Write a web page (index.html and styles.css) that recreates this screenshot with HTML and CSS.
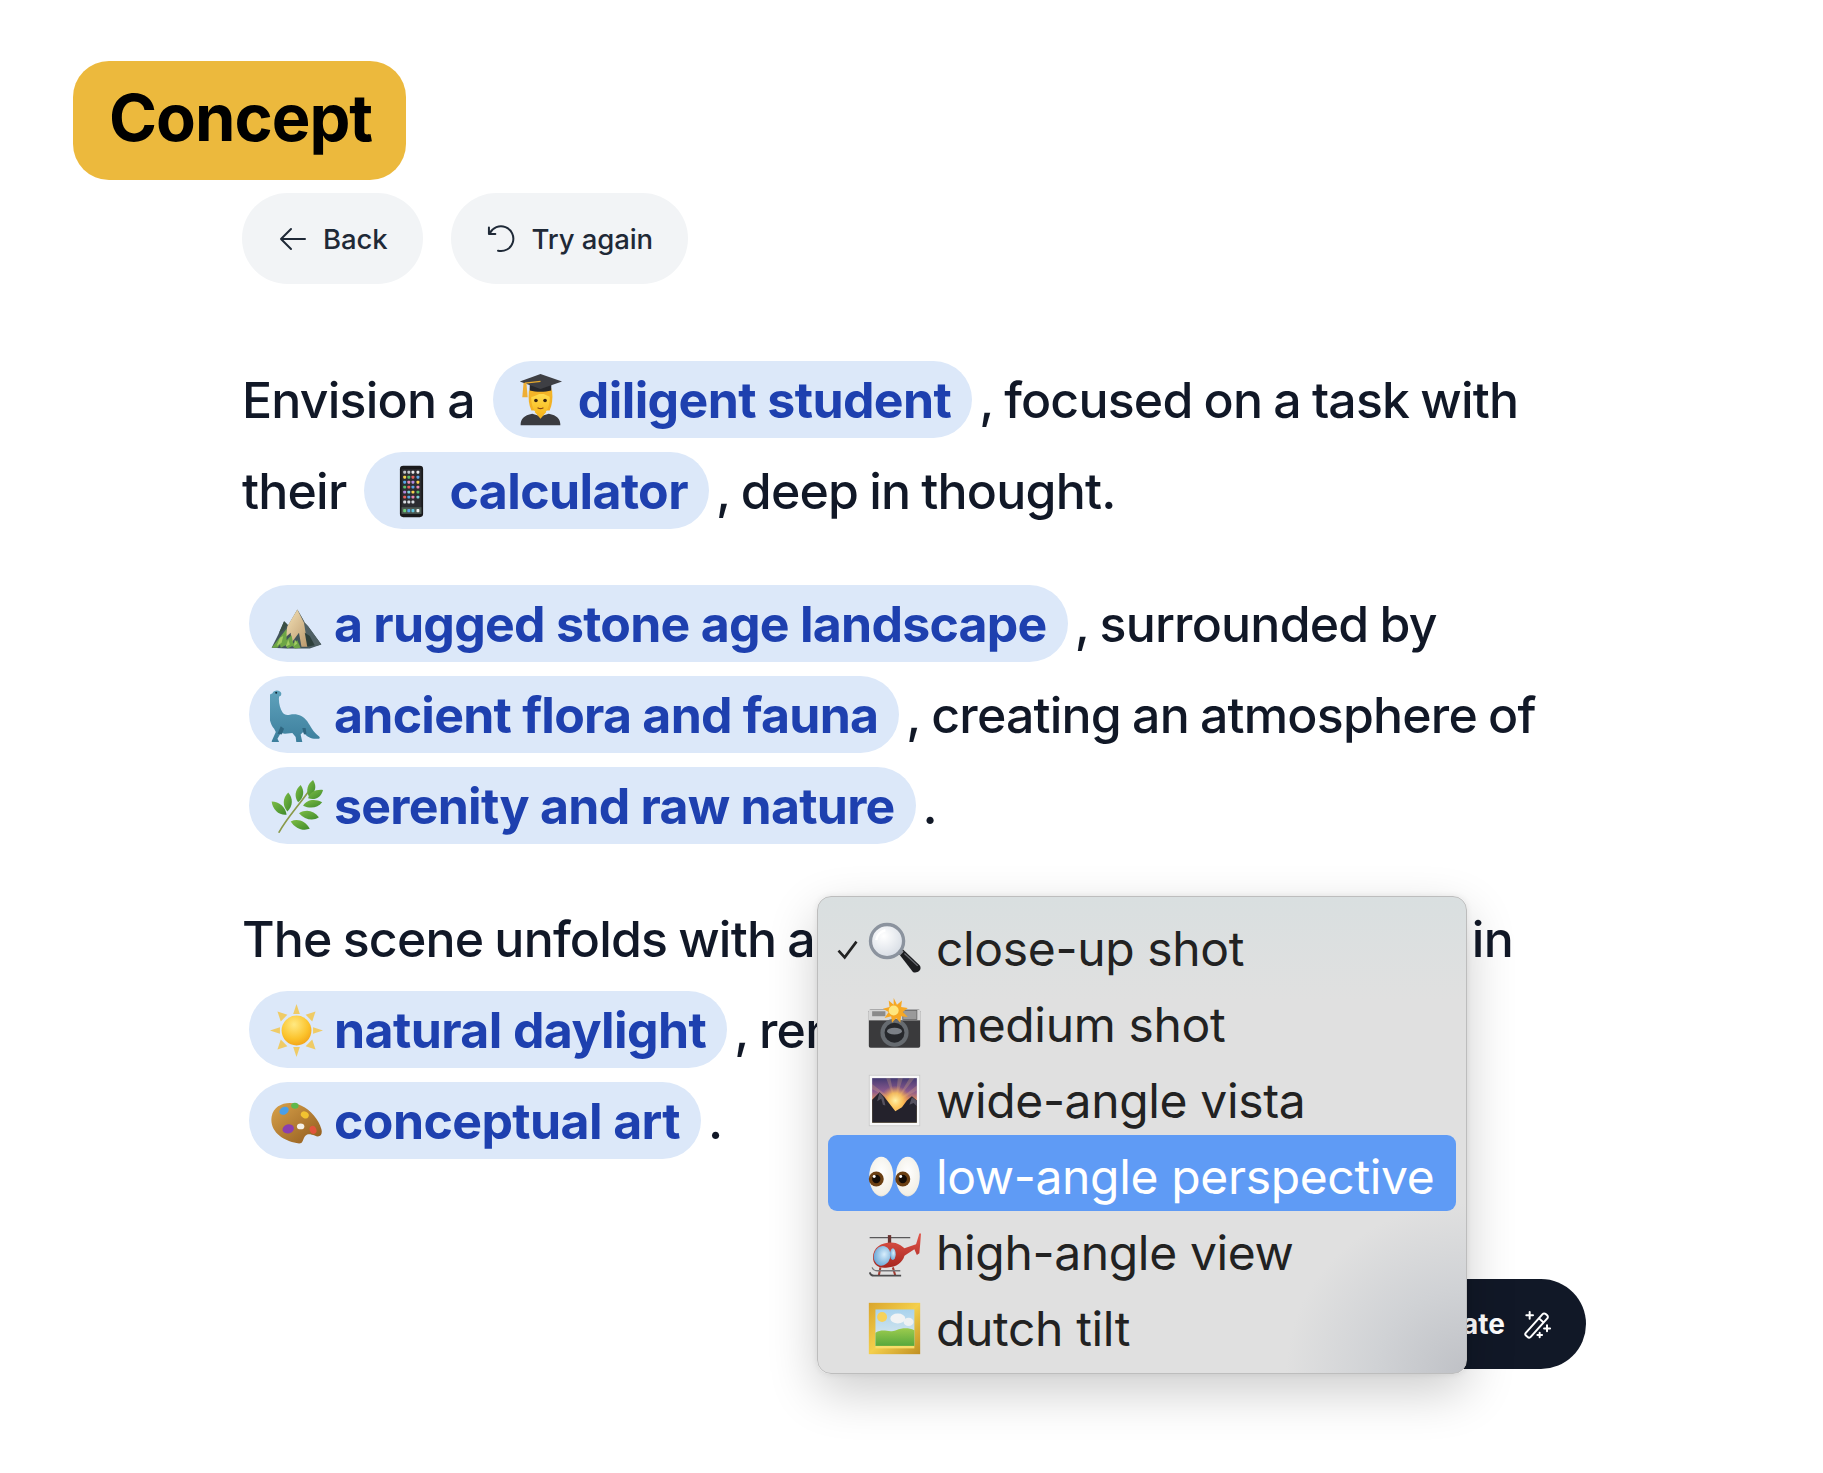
FILE: index.html
```html
<!DOCTYPE html>
<html lang="en">
<head>
<meta charset="utf-8">
<title>Concept</title>
<link rel="stylesheet" href="styles.css">
</head>
<body>
<main class="page">
  <div class="badge">Concept</div>
  <div class="content">
    <div class="toolbar">
      <button class="tool">
        <svg class="tool-icon" viewBox="0 0 24 24"><path d="M10.500 19.500 3 12l7.500-7.500M3 12h18"/></svg>
        Back
      </button>
      <button class="tool">
        <svg class="tool-icon" viewBox="0 0 24 24"><path d="M2.200 3.400v4.800H7M2.800 7.800A9.300 9.300 0 1 1 9 20.800"/></svg>
        Try again
      </button>
    </div>

    <p class="story">Envision a <span class="pill loose"><svg class="emoji" viewBox="0 0 64 64"><use href="#e-student"/></svg>diligent student</span>, focused on a task with their <span class="pill loose"><svg class="emoji" viewBox="0 0 64 64"><use href="#e-phone"/></svg>calculator</span>, deep in thought.</p>

    <p class="story"><span class="pill"><svg class="emoji" viewBox="0 0 64 64"><use href="#e-mountain"/></svg>a rugged stone age landscape</span>, surrounded by <span class="pill"><svg class="emoji" viewBox="0 0 64 64"><use href="#e-dino"/></svg>ancient flora and fauna</span>, creating an atmosphere of <span class="pill"><svg class="emoji" viewBox="0 0 64 64"><use href="#e-herb"/></svg>serenity and raw nature</span>.</p>

    <p class="story">The scene unfolds with a <span class="pill"><svg class="emoji" viewBox="0 0 64 64"><use href="#e-glass"/></svg>close-up shot</span>, bathed in <span class="pill loose"><svg class="emoji" viewBox="0 0 64 64"><use href="#e-sun"/></svg>natural daylight</span>, rendered in the style of <span class="pill loose"><svg class="emoji" viewBox="0 0 64 64"><use href="#e-palette"/></svg>conceptual art</span>.</p>

    <div class="actions">
      <button class="generate">Generate
        <svg class="wand" viewBox="0 0 24 24"><path d="m3.600 18.600 12.600-14a1.600 1.600 0 0 1 2.300-.1l1.100 1a1.600 1.600 0 0 1 .1 2.300L7.300 21.700a1.600 1.600 0 0 1-2.300.1l-1.300-1.100a1.600 1.600 0 0 1-.1-2.100ZM13.400 7.600l3.500 3.300M6.500 3v5M4 5.500h5M19.500 13v4.500M17.300 15.300h4.500M14 18.500v3.500M12.300 20.300h3.500"/></svg>
      </button>
    </div>
  </div>

  <ul class="menu">
    <li class="menu-item"><svg class="check" viewBox="0 0 24 24"><path d="m4 13 5.500 6L20 5"/></svg><svg class="emoji" viewBox="0 0 64 64"><use href="#e-glass"/></svg>close-up shot</li>
    <li class="menu-item"><svg class="emoji" viewBox="0 0 64 64"><use href="#e-camera"/></svg>medium shot</li>
    <li class="menu-item"><svg class="emoji" viewBox="0 0 64 64"><use href="#e-vista"/></svg>wide-angle vista</li>
    <li class="menu-item active"><svg class="emoji" viewBox="0 0 64 64"><use href="#e-eyes"/></svg>low-angle perspective</li>
    <li class="menu-item"><svg class="emoji" viewBox="0 0 64 64"><use href="#e-heli"/></svg>high-angle view</li>
    <li class="menu-item"><svg class="emoji" viewBox="0 0 64 64"><use href="#e-frame"/></svg>dutch tilt</li>
  </ul>
</main>

<svg class="sprites" aria-hidden="true">
  <defs>
    <linearGradient id="g-skin" x1="0" y1="0" x2="0" y2="1"><stop offset="0" stop-color="#ffdc4e"/><stop offset="1" stop-color="#f8b91e"/></linearGradient>
    <radialGradient id="g-sun" cx=".42" cy=".3" r=".8"><stop offset="0" stop-color="#ffe982"/><stop offset=".6" stop-color="#fbc32c"/><stop offset="1" stop-color="#f09a12"/></radialGradient>
    <linearGradient id="g-dino" x1="0" y1="0" x2="0" y2="1"><stop offset="0" stop-color="#5fa2bc"/><stop offset="1" stop-color="#3b7d9b"/></linearGradient>
    <linearGradient id="g-wood" x1="0" y1="0" x2="1" y2="1"><stop offset="0" stop-color="#d9a24a"/><stop offset="1" stop-color="#8f5a1d"/></linearGradient>
    <linearGradient id="g-dusk" x1="0" y1="0" x2="0" y2="1"><stop offset="0" stop-color="#443a72"/><stop offset=".3" stop-color="#8c5a8e"/><stop offset=".55" stop-color="#f0984a"/><stop offset=".8" stop-color="#ffe58a"/></linearGradient>
    <radialGradient id="g-glow" cx=".5" cy=".5" r=".5"><stop offset="0" stop-color="#fff2a8"/><stop offset=".5" stop-color="#ffc85a" stop-opacity=".85"/><stop offset="1" stop-color="#f59a4a" stop-opacity="0"/></radialGradient>
    <radialGradient id="g-glass" cx=".4" cy=".35" r=".7"><stop offset="0" stop-color="#fff"/><stop offset="1" stop-color="#d5dbe3"/></radialGradient>
    <linearGradient id="g-gold" x1="0" y1="0" x2="1" y2="1"><stop offset="0" stop-color="#d9a52c"/><stop offset=".5" stop-color="#f4cf4c"/><stop offset="1" stop-color="#c08f22"/></linearGradient>
    <linearGradient id="g-sky" x1="0" y1="0" x2="0" y2="1"><stop offset="0" stop-color="#a9d3ee"/><stop offset="1" stop-color="#e3ecec"/></linearGradient>
    <linearGradient id="g-hill" x1="0" y1="0" x2="0" y2="1"><stop offset="0" stop-color="#9ccb4e"/><stop offset="1" stop-color="#57a83c"/></linearGradient>
    <linearGradient id="g-red" x1="0" y1="0" x2="0" y2="1"><stop offset="0" stop-color="#e2574c"/><stop offset="1" stop-color="#a8261f"/></linearGradient>
    <radialGradient id="g-window" cx=".6" cy=".4" r=".7"><stop offset="0" stop-color="#d8eefc"/><stop offset="1" stop-color="#5f9fd2"/></radialGradient>
    <radialGradient id="g-eye" cx=".5" cy=".4" r=".65"><stop offset="0" stop-color="#fff"/><stop offset=".85" stop-color="#f2efe6"/><stop offset="1" stop-color="#d4cfc0"/></radialGradient>
    <linearGradient id="g-rock" x1="0" y1="0" x2="1" y2="1"><stop offset="0" stop-color="#f5e3b8"/><stop offset="1" stop-color="#b8966a"/></linearGradient>
    <linearGradient id="g-leaf" x1="0" y1="0" x2="1" y2="1"><stop offset="0" stop-color="#7dbd45"/><stop offset="1" stop-color="#3f8a2c"/></linearGradient>

    <symbol id="e-student" viewBox="0 0 64 64">
      <path d="M8 62c0-8 4-12 14-14l10 3 10-3c10 2 14 6 14 14Z" fill="#3a3b40"/>
      <path d="M25 46l7 8 7-8-3-4h-8Z" fill="#f5b722"/>
      <path d="M18 20c-1 10 0 18 3 24h22c3-6 4-14 3-24Z" fill="#f2b125"/>
      <path d="M21 24h22c1 14-3 24-11 24s-12-10-11-24Z" fill="url(#g-skin)"/>
      <path d="M19 17h26l1 11c-5-1-9-3-13-6-3 3-8 5-14 6Z" fill="#f3b428"/>
      <circle cx="26.500" cy="32" r="2.200" fill="#3a2410"/><circle cx="37.500" cy="32" r="2.200" fill="#3a2410"/>
      <path d="M29 41c2 1 4 1 6 0" fill="none" stroke="#8a4a12" stroke-width="1.500" stroke-linecap="round"/>
      <path d="M19 13v7c8 2 18 2 26 0v-7Z" fill="#27282c"/>
      <path d="M32 0 58 9 32 18 7 9Z" fill="#3e3f44"/>
      <path d="M32 9 13 11" fill="none" stroke="#e7a92c" stroke-width="1.500"/>
      <path d="M11.500 11h3.500l1.500 17h-6.500Z" fill="#eeae35"/>
    </symbol>

    <symbol id="e-phone" viewBox="0 0 64 64">
      <rect x="18" y="1" width="28" height="62" rx="4" fill="#1a1a1c"/>
      <rect x="20" y="5" width="24" height="54" fill="#2c2c30"/>
      <g fill="#bfc4c9"><rect x="22" y="7" width="3.500" height="3.500" rx="1"/><rect x="27" y="7" width="3.500" height="3.500" rx="1"/></g>
      <g fill="#e9e9ea"><rect x="32" y="7" width="3.500" height="3.500" rx="1"/><rect x="38" y="7" width="3.500" height="3.500" rx="1"/></g>
      <g fill="#f6d24a"><rect x="22" y="13" width="3.500" height="3.500" rx="1"/><rect x="38" y="19" width="3.500" height="3.500" rx="1"/><rect x="32" y="31" width="3.500" height="3.500" rx="1"/></g>
      <g fill="#5bbf6a"><rect x="27" y="13" width="3.500" height="3.500" rx="1"/><rect x="22" y="25" width="3.500" height="3.500" rx="1"/><rect x="38" y="31" width="3.500" height="3.500" rx="1"/></g>
      <g fill="#e66060"><rect x="32" y="13" width="3.500" height="3.500" rx="1"/><rect x="27" y="25" width="3.500" height="3.500" rx="1"/><rect x="22" y="37" width="3.500" height="3.500" rx="1"/></g>
      <g fill="#5aa5e8"><rect x="38" y="13" width="3.500" height="3.500" rx="1"/><rect x="22" y="19" width="3.500" height="3.500" rx="1"/><rect x="32" y="25" width="3.500" height="3.500" rx="1"/><rect x="27" y="37" width="3.500" height="3.500" rx="1"/></g>
      <g fill="#e88ab5"><rect x="27" y="19" width="3.500" height="3.500" rx="1"/><rect x="38" y="25" width="3.500" height="3.500" rx="1"/><rect x="32" y="37" width="3.500" height="3.500" rx="1"/></g>
      <g fill="#b08adf"><rect x="32" y="19" width="3.500" height="3.500" rx="1"/><rect x="22" y="31" width="3.500" height="3.500" rx="1"/></g>
      <g fill="#7fd0d8"><rect x="27" y="31" width="3.500" height="3.500" rx="1"/><rect x="38" y="37" width="3.500" height="3.500" rx="1"/></g>
      <g fill="#d7dbe0"><rect x="22" y="43" width="3.500" height="3.500" rx="1"/><rect x="27" y="43" width="3.500" height="3.500" rx="1"/><rect x="32" y="43" width="3.500" height="3.500" rx="1"/></g>
      <rect x="20" y="51" width="24" height="8" fill="#4d5a52"/>
      <rect x="22" y="53" width="3.500" height="4" rx="1" fill="#6dcf78"/><rect x="27" y="53" width="3.500" height="4" rx="1" fill="#5aa5e8"/><rect x="32" y="53" width="3.500" height="4" rx="1" fill="#62c7e0"/><rect x="38" y="53" width="3.500" height="4" rx="1" fill="#f2f2f2"/>
    </symbol>

    <symbol id="e-mountain" viewBox="0 0 64 64">
      <path d="M33 14 22 33l-5-5-7 16-8 16 18 1h28l14-5-16-22-4-4-2-4Z" fill="#42545a"/>
      <path d="M33 14 21 34l-3 14 7-6 1 12 9-12 3 17h10l-2-24-6-8Z" fill="url(#g-rock)"/>
      <path d="M33 14l8 16 5 30 16-4-16-22-4-4Z" fill="#4f6064"/>
      <path d="M20 37 2 60h7l3-4 1 4 6-3 2 4 6-3 3 3 7-1-4-9-5 4-2-10-6 6Z" fill="#6da546"/>
      <path d="M12 48l-4 10 6-4 2-8ZM22 50l-3 9 5-3ZM30 50l-1 8 4-3Z" fill="#a3cc62"/>
      <path d="M42 42l3 17 9-2-6-11Z" fill="#2d3f3b"/>
      <path d="M17 28l-6 14 6-4 4-6Z" fill="#3a4f44"/>
    </symbol>

    <symbol id="e-dino" viewBox="0 0 64 64">
      <path d="M3 5c1-3 6-4 9-2 2 1 2 3 1 5l-2 1c-1 6 1 14 4 19 2 3 5 4 9 3 8-2 16 1 21 8 4 6 7 13 14 18 2 2 1 3-1 3-7 1-13-2-17-7l-1-1-3 3 2 9-2 2h-5l-1-8-4-5-9 1-5-1-4 7 3 6-2 1-7-1-1-3 5-11-2-4c-5-5-6-14-7-22-1-5-1-9-3-12-2 0-5-1-4-3Z" fill="url(#g-dino)"/>
      <circle cx="7.500" cy="4.500" r="1.200" fill="#102733"/>
      <path d="M13 45l-4 9 5 1 3-7ZM39 47l2 8 3-1-1-7Z" fill="#2f6680"/>
    </symbol>

    <symbol id="e-herb" viewBox="0 0 64 64">
      <path d="M11 63C20 46 34 32 50 9" fill="none" stroke="#8a9a4a" stroke-width="2" stroke-linecap="round"/>
      <g fill="url(#g-leaf)">
        <path d="M52 0c5 8 3 15-5 20-4-7-2-15 5-20Z"/>
        <path d="M64 12c-2 9-10 13-18 10 2-7 9-11 18-10Z"/>
        <path d="M37 6c5 7 4 15-3 21-5-7-4-15 3-21Z"/>
        <path d="M63 27c-5 7-15 8-23 4 4-7 14-9 23-4Z"/>
        <path d="M22 15c6 7 6 16-1 23-6-7-6-16 1-23Z"/>
        <path d="M59 45c-7 5-17 3-24-5 9-5 18-3 24 5Z"/>
        <path d="M2 26c9 0 17 7 18 16-9 1-17-6-18-16Z"/>
        <path d="M48 59c-9 3-18-1-23-9 9-4 18 0 23 9Z"/>
      </g>
    </symbol>

    <symbol id="e-sun" viewBox="0 0 64 64">
      <g fill="#efcb66">
        <path d="M32 0l4 12h-8Z"/><path d="M32 64l-4-12h8Z"/><path d="M0 32l12-4v8Z"/><path d="M64 32l-12 4v-8Z"/>
        <path d="M9 9l12 4-8 8Z"/><path d="M55 9l-4 12-8-8Z"/><path d="M9 55l4-12 8 8Z"/><path d="M55 55l-12-4 8-8Z"/>
      </g>
      <circle cx="32" cy="32" r="18" fill="url(#g-sun)"/>
    </symbol>

    <symbol id="e-palette" viewBox="0 0 64 64">
      <path d="M2 26C5 10 24 6 38 13c11 5 21 17 24 28 2 7-2 11-8 8-5-2-9-3-12 1-3 5-2 10-10 8C16 55-1 44 2 26Z" fill="url(#g-wood)"/>
      <ellipse cx="17" cy="19" rx="6" ry="4.500" fill="#4a9fe8" transform="rotate(-30 17 19)"/>
      <ellipse cx="30" cy="13" rx="4.500" ry="3.500" fill="#5fb84c"/>
      <ellipse cx="42" cy="24" rx="5" ry="4" fill="#f2c230" transform="rotate(30 42 24)"/>
      <ellipse cx="22" cy="41" rx="7" ry="5.500" fill="#8a3fae" transform="rotate(-15 22 41)"/>
      <ellipse cx="52" cy="42" rx="4" ry="5" fill="#e2553c" transform="rotate(-20 52 42)"/>
      <ellipse cx="37" cy="38" rx="4.500" ry="3.500" fill="#f4f1e8"/>
    </symbol>

    <symbol id="e-glass" viewBox="0 0 64 64">
      <path d="M37 38 42 33 62 52c2 2 2 5 0 7s-6 3-8 1Z" fill="#1c1d20"/>
      <path d="M44 38 60 53" stroke="#6d7076" stroke-width="1.500" fill="none"/>
      <path d="M33 34 37 30 43 36 39 40Z" fill="#8e9299"/>
      <circle cx="23" cy="23" r="20" fill="url(#g-glass)" stroke="#8b939e" stroke-width="4"/>
      <path d="M10 22a14 14 0 0 1 11-12" fill="none" stroke="#fff" stroke-width="3"/>
    </symbol>

    <symbol id="e-camera" viewBox="0 0 64 64">
      <rect x="1" y="14" width="62" height="46" rx="2" fill="#3a3a3c"/>
      <rect x="1" y="14" width="62" height="13" fill="#d6d6d6"/>
      <rect x="5" y="16" width="16" height="6" fill="#8b8b8b"/>
      <rect x="42" y="15" width="17" height="11" fill="#9a9a9a" stroke="#666"/>
      <circle cx="32" cy="42" r="17" fill="#666b70"/>
      <circle cx="32" cy="42" r="12" fill="#26282c"/>
      <ellipse cx="32" cy="40" rx="9" ry="4" fill="#7b8087"/>
      <path d="M31 0l4 8 6-5-1 8 8 1-6 5 6 6-8-1-1 8-5-6-5 6-1-8-8 2 5-7-7-4 8-2-1-8 6 5Z" fill="#f6a824"/>
      <circle cx="31" cy="15" r="6" fill="#ffe77e"/>
    </symbol>

    <symbol id="e-vista" viewBox="0 0 64 64">
      <rect x="1.500" y="1.500" width="61" height="61" fill="#f8f8f8" stroke="#c9c9c9"/>
      <rect x="5" y="5" width="54" height="54" fill="url(#g-dusk)"/>
      <path d="M33 34 22 5h5ZM33 34 36 5h6ZM33 34 50 5h6ZM33 34 5 12v6ZM33 34 59 14v6Z" fill="#ffcf80" fill-opacity=".22"/>
      <circle cx="33" cy="32" r="18" fill="url(#g-glow)"/>
      <path d="M5 59V31l9-9 6 6 6 8 7 9 8-5 6-8 6-5 6 5v27Z" fill="#24222c"/>
      <path d="M14 22l-3 11 5-3 2 7 3 1-2-9ZM53 28l-3 9 5-2 4 4v-7Z" fill="#55515f"/>
    </symbol>

    <symbol id="e-eyes" viewBox="0 0 64 64">
      <ellipse cx="16" cy="32" rx="14.500" ry="24" fill="url(#g-eye)"/>
      <ellipse cx="48" cy="32" rx="14.500" ry="24" fill="url(#g-eye)"/>
      <circle cx="10" cy="35" r="9" fill="#6b3f12"/><circle cx="10" cy="35" r="5" fill="#140c05"/><circle cx="7.500" cy="32" r="1.800" fill="#fff"/>
      <circle cx="42" cy="35" r="9" fill="#6b3f12"/><circle cx="42" cy="35" r="5" fill="#140c05"/><circle cx="39.500" cy="32" r="1.800" fill="#fff"/>
    </symbol>

    <symbol id="e-heli" viewBox="0 0 64 64">
      <path d="M2 14h49" stroke="#59585a" stroke-width="1.500"/>
      <rect x="24" y="11" width="4" height="10" fill="#6a3330"/>
      <path d="M6 38C6 26 16 20 28 20c8 0 12 4 16 7l14-5 4-13h2l-1 13-1 11-3 2-3-7-12 8c-2 8-10 14-20 14C12 52 6 46 6 38Z" fill="url(#g-red)"/>
      <ellipse cx="17" cy="36" rx="10" ry="12" fill="url(#g-window)" transform="rotate(15 17 36)"/>
      <ellipse cx="30" cy="34" rx="3.500" ry="7" fill="url(#g-window)"/>
      <path d="M15 50l-2 10M30 50l3 10" stroke="#a33a30" stroke-width="2.500"/>
      <path d="M2 56c1 3 2 4 5 4h33" stroke="#4d4d4f" stroke-width="2" fill="none"/>
      <path d="M5 50c1 3 3 4 6 4h28" stroke="#77777a" stroke-width="1.600" fill="none"/>
    </symbol>

    <symbol id="e-frame" viewBox="0 0 64 64">
      <rect x="1" y="1" width="62" height="62" fill="url(#g-gold)"/>
      <rect x="9" y="9" width="47" height="44" fill="url(#g-sky)"/>
      <circle cx="17" cy="18" r="6" fill="#f6d25a"/>
      <ellipse cx="36" cy="20" rx="9" ry="6" fill="#f1f3f4"/><ellipse cx="49" cy="24" rx="6" ry="5" fill="#eef1f3"/>
      <path d="M9 37c11-6 15 1 25-3 8-3 15-3 22 0v19H9Z" fill="url(#g-hill)"/>
      <rect x="9" y="53" width="47" height="3" fill="#f8dd6a"/>
    </symbol>
  </defs>
</svg>
</body>
</html>
```

FILE: styles.css
```css
* { box-sizing: border-box; }

html, body {
  margin: 0;
  background: #fff;
}

body {
  min-height: 1473px;
  overflow: hidden;
  font-family: Inter, "Liberation Sans", sans-serif;
  color: #111827;
}

.page {
  position: relative;
  padding: 61px 0 0 73px;
}

.sprites {
  position: absolute;
  width: 0;
  height: 0;
}

.badge {
  display: inline-flex;
  align-items: center;
  height: 119px;
  width: 333px;
  padding: 0 0 6px 36px;
  border-radius: 36px;
  background: #ecb93d;
  color: #000;
  font-size: 65px;
  font-weight: 700;
  letter-spacing: -1px;
}

.content {
  width: 1344px;
  margin: 13px 0 0 169px;
}

.toolbar {
  display: flex;
  gap: 28px;
}

.tool {
  display: flex;
  align-items: center;
  gap: 14px;
  height: 91px;
  padding: 0 35px;
  border: 0;
  border-radius: 46px;
  background: #f2f4f6;
  color: #1f2937;
  font: 500 27.500px Inter, "Liberation Sans", sans-serif;
  letter-spacing: -0.1px;
}

.tool-icon {
  width: 32px;
  height: 32px;
  fill: none;
  stroke: #1f2937;
  stroke-width: 1.500;
  stroke-linecap: round;
  stroke-linejoin: round;
}

.story {
  margin: 0 0 42px;
  font-size: 50px;
  font-weight: 550;
  line-height: 91px;
  letter-spacing: -0.800px;
  word-spacing: -1.500px;
}

.toolbar + .story {
  margin-top: 71px;
}

.pill {
  display: inline-block;
  height: 77px;
  margin: 0 7px;
  padding: 0 21px;
  border-radius: 39px;
  background: #dce8f9;
  color: #1e40af;
  font-weight: 650;
  line-height: 79px;
  letter-spacing: -0.750px;
  word-spacing: 0;
  white-space: nowrap;
}

.pill.loose {
  letter-spacing: -0.600px;
}

.emoji {
  flex: none;
  width: 53px;
  height: 53px;
}

.pill .emoji {
  margin-right: 11px;
  vertical-align: middle;
  position: relative;
  top: -4px;
}

.actions {
  display: flex;
  justify-content: flex-end;
  margin-top: 112px;
}

.generate {
  display: flex;
  align-items: center;
  gap: 16px;
  height: 90px;
  padding: 0 33px 0 36px;
  border: 0;
  border-radius: 45px;
  background: #111827;
  color: #fff;
  font: 700 28px Inter, "Liberation Sans", sans-serif;
}

.wand {
  width: 32px;
  height: 32px;
  fill: none;
  stroke: #fff;
  stroke-width: 1.500;
  stroke-linecap: round;
  stroke-linejoin: round;
}

.menu {
  position: absolute;
  left: 817px;
  top: 896px;
  width: 650px;
  height: 478px;
  margin: 0;
  padding: 10px;
  list-style: none;
  border: 1px solid #bdbdbd;
  border-radius: 14px;
  background:
    radial-gradient(ellipse 180px 170px at 100% 100%, #bfc1c6 0%, #d0d2d5 50%, rgba(224, 224, 224, 0) 100%),
    linear-gradient(180deg, #d9dfe0 0%, #e0e0e0 22%);
  box-shadow: 0 18px 50px rgba(0, 0, 0, 0.2), 0 0 6px rgba(0, 0, 0, 0.08);
  color: #222;
  font-size: 48px;
  letter-spacing: -0.350px;
}

.menu-item {
  position: relative;
  display: flex;
  align-items: center;
  gap: 15px;
  height: 76px;
  padding: 6px 0 0 40px;
  border-radius: 9px;
  white-space: nowrap;
}

.menu-item.active {
  background: #5f9bf5;
  color: #fff;
}

.check {
  position: absolute;
  left: 6px;
  top: 29px;
  width: 27px;
  height: 27px;
  fill: none;
  stroke: #222;
  stroke-width: 2.300;
}
```
